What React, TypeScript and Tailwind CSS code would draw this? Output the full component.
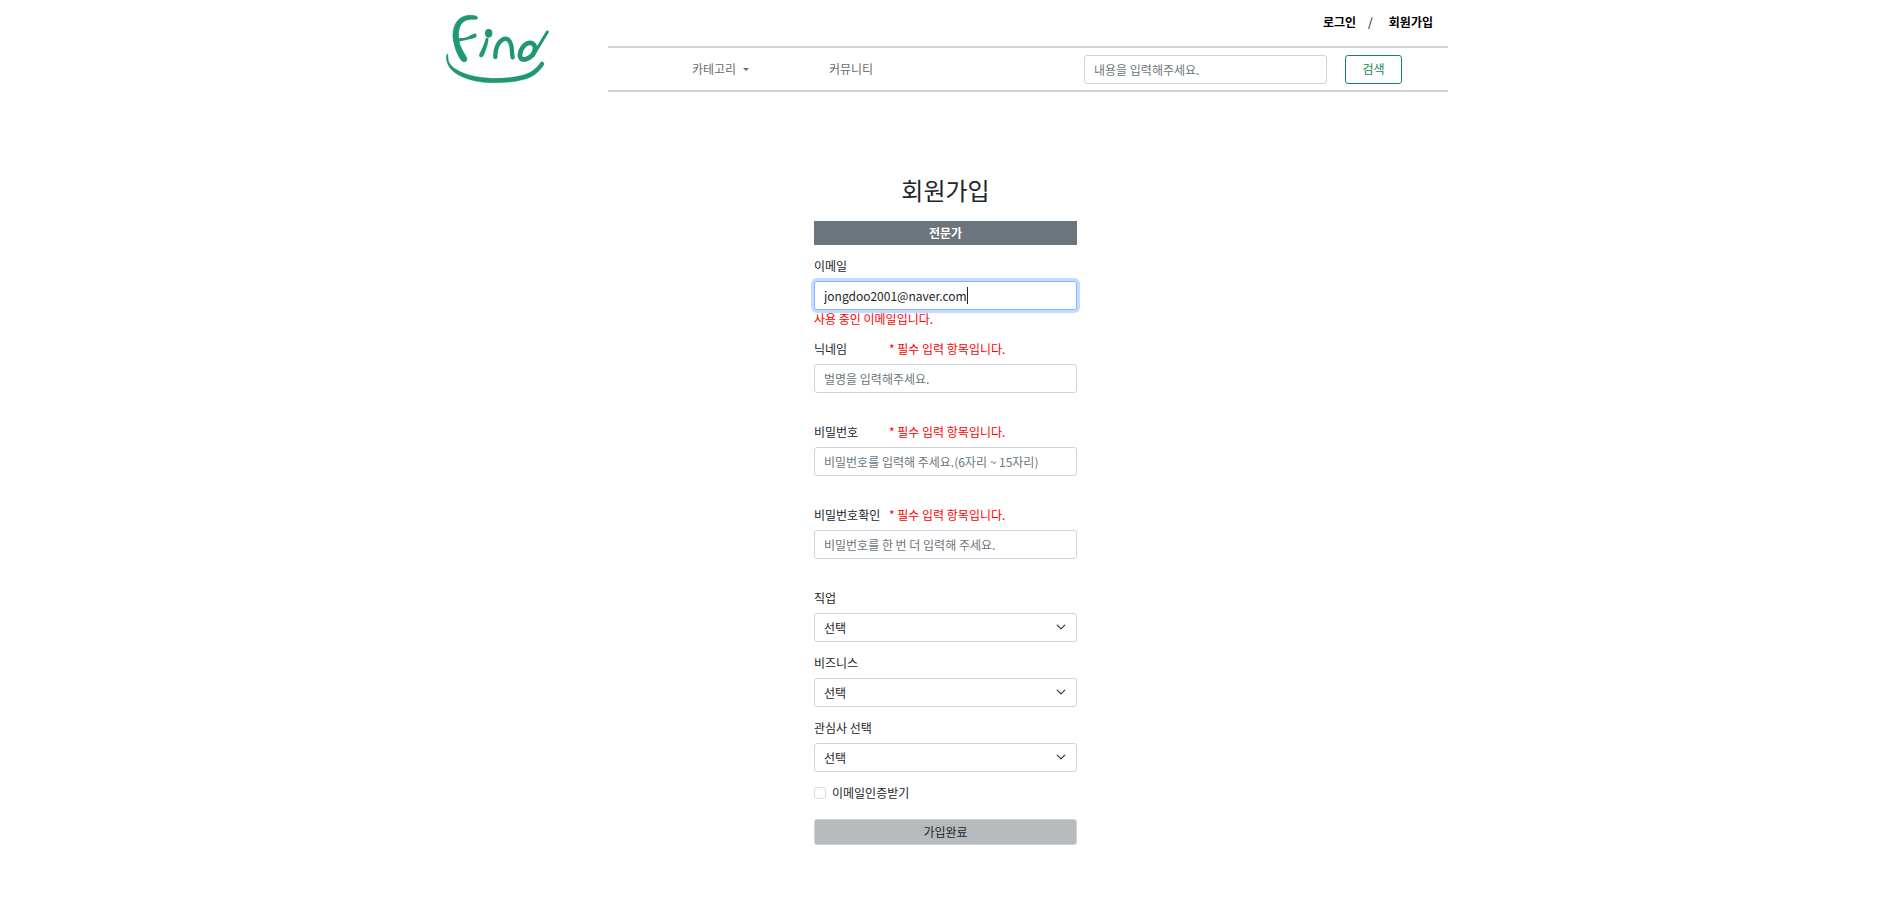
import { useId, useState } from "react";
import type { ReactNode } from "react";

const control =
  "block h-[29px] w-full rounded-[3px] border border-[#ced4da] bg-white px-[9px] text-xs text-[#212529] outline-none placeholder:text-[#6c757d]";

function Logo() {
  return (
    <svg
      className="h-[70px] w-[104px]"
      viewBox="48 42 312 210"
      fill="none"
      stroke="#1f9674"
      strokeLinecap="round"
      strokeLinejoin="round"
      role="img"
      aria-label="Find"
    >
      <path fill="#1f9674" stroke="#1f9674" strokeWidth="2" d="M141 57C144 53 142 49 137 48C119 43 97 47 84 61C71 76 67 97 70 120C74 144 82 163 91 177C95 184 103 188 108 184C113 180 110 173 106 166C97 151 89 137 87 123C84 101 86 83 94 72C103 59 120 57 136 58Z" />
      <path strokeWidth="9" d="M88 119C102 119 116 115 130 108" />
      <path strokeWidth="12" d="M124 111L134 107" />
      <ellipse cx="176" cy="100" rx="11" ry="13" fill="#1f9674" stroke="none" />
      <path fill="#1f9674" stroke="#1f9674" strokeWidth="1" d="M167 117C168 113 175 112 175 118C174 132 167 153 160 167C156 174 147 172 148 165C150 157 161 141 167 117Z" />
      <path strokeWidth="13" d="M196 171C195 149 203 127 219 118C232 112 241 122 244 137C247 151 245 163 248 172" />
      <path strokeWidth="14" d="M313 136C305 124 289 127 278 142C269 154 267 172 275 177C284 181 299 175 307 165C314 155 318 145 313 136Z" />
      <path strokeWidth="9" d="M352 96C338 119 323 144 309 167" />
      <path fill="#1f9674" stroke="#1f9674" strokeWidth="1" d="M52 162C48 164 48 175 51 185C57 211 87 232 132 242C184 253 245 249 287 237C316 228 333 208 341 195C345 187 336 182 331 188C319 206 302 219 276 226C233 237 181 238 134 229C91 220 61 203 55 181C54 174 55 163 52 162Z" />
    </svg>
  );
}

function Field({
  label,
  note,
  children,
}: {
  label: string;
  note?: string;
  children: (id: string) => ReactNode;
}) {
  const id = useId();
  return (
    <div>
      <div className="mb-1.5 flex h-[18px] items-center leading-[18px]">
        <label htmlFor={id} className="min-w-[75px]">
          {label}
        </label>
        {note && <span className="text-[#ff0000]">{note}</span>}
      </div>
      {children(id)}
    </div>
  );
}

function SelectField({ label }: { label: string }) {
  return (
    <Field label={label}>
      {(id) => (
        <div className="relative">
          <select id={id} className={`${control} appearance-none pr-8`}>
            <option>선택</option>
          </select>
          <svg
            className="pointer-events-none absolute top-[9px] right-[11px] size-2.5"
            viewBox="0 0 16 16"
            fill="none"
            stroke="#343a40"
            strokeWidth="2"
            strokeLinecap="round"
            strokeLinejoin="round"
            aria-hidden="true"
          >
            <path d="m2 5 6 6 6-6" />
          </svg>
        </div>
      )}
    </Field>
  );
}

export default function App() {
  const [email, setEmail] = useState("jongdoo2001@naver.com");
  return (
    <div className="min-h-screen bg-white font-['Noto_Sans_CJK_KR',sans-serif] text-xs text-[#212529]">
      <header className="mx-auto flex w-full max-w-[1012px]">
        <a href="#home" className="w-[172px] shrink-0 pt-3.5 pl-2.5">
          <Logo />
        </a>
        <div className="grow">
          <div className="flex h-[46px] items-center justify-end pr-[15px] pb-0.5 font-bold text-black">
            <a href="#login">로그인</a>
            <span className="pr-4 pl-3 font-normal">/</span>
            <a href="#join">회원가입</a>
          </div>
          <nav className="flex h-[46px] items-center border-y-2 border-[#d3d3d3] pr-[46px] pl-[84px] text-[#6c6c6c]">
            <button type="button" className="flex w-[137px] items-center gap-[7px]">
              카테고리
              <svg className="h-[3px] w-1.5" viewBox="0 0 6 3" fill="currentColor" aria-hidden="true">
                <path d="M0 0h6L3 3z" />
              </svg>
            </button>
            <a href="#community">커뮤니티</a>
            <form className="ml-auto flex gap-[18px]">
              <div className="w-[243px]">
                <input aria-label="검색어" className={control} placeholder="내용을 입력해주세요." />
              </div>
              <button
                type="button"
                className="h-[29px] w-[57px] rounded-[3px] border border-[#198754] text-[#198754]"
              >
                검색
              </button>
            </form>
          </nav>
        </div>
      </header>

      <main className="pt-20 pb-12 pl-[7px]">
        <form className="mx-auto w-full max-w-[263px]">
          <h1 className="mb-[13px] text-center text-2xl leading-9">회원가입</h1>
          <div className="mb-3 h-6 bg-[#6c757d] text-center leading-6 font-bold text-white">전문가</div>

          <Field label="이메일">
            {(id) => (
              <div className="relative">
                <input
                  id={id}
                  type="text"
                  value={email}
                  onChange={(e) => setEmail(e.target.value)}
                  className="block h-[29px] w-full rounded-[3px] border border-[#86b7fe] bg-white px-[9px] text-xs text-[#212529] ring-3 ring-[#c2dbfe] outline-none"
                />
                <span className="absolute top-1.5 left-[153px] h-[17px] w-px bg-[#212529]" />
              </div>
            )}
          </Field>
          <p className="mb-3 leading-[18px] text-[#ff0000]">사용 중인 이메일입니다.</p>

          <div className="mb-[30px]">
            <Field label="닉네임" note="* 필수 입력 항목입니다.">
              {(id) => <input id={id} className={control} placeholder="벌명을 입력해주세요." />}
            </Field>
          </div>
          <div className="mb-[30px]">
            <Field label="비밀번호" note="* 필수 입력 항목입니다.">
              {(id) => (
                <input
                  id={id}
                  type="password"
                  className={control}
                  placeholder="비밀번호를 입력해 주세요.(6자리 ~ 15자리)"
                />
              )}
            </Field>
          </div>
          <div className="mb-[30px]">
            <Field label="비밀번호확인" note="* 필수 입력 항목입니다.">
              {(id) => (
                <input
                  id={id}
                  type="password"
                  className={control}
                  placeholder="비밀번호를 한 번 더 입력해 주세요."
                />
              )}
            </Field>
          </div>

          <div className="flex flex-col gap-3">
            <SelectField label="직업" />
            <SelectField label="비즈니스" />
            <SelectField label="관심사 선택" />
            <label className="flex h-[18px] items-center gap-1.5">
              <input
                type="checkbox"
                className="size-3 appearance-none rounded-[3px] border border-[#dcdcdc] bg-white checked:bg-[#0d6efd]"
              />
              이메일인증받기
            </label>
          </div>
          <button
            type="button"
            className="mt-[17px] h-[26px] w-full rounded-[3px] border border-[#ced4da] bg-[#b5babf] text-[#212529]"
          >
            가입완료
          </button>
        </form>
      </main>
    </div>
  );
}
